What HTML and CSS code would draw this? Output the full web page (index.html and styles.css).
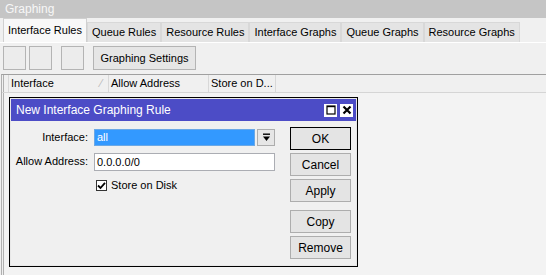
FILE: index.html
```html
<!DOCTYPE html>
<html lang="en">
<head>
    <meta charset="UTF-8">
    <title>Graphing</title>
    <link rel="stylesheet" href="styles.css">
</head>
<body>
    <main id="graphing">
        <header class="caption">Graphing</header>
        <nav class="tabs">
            <span class="tab active">Interface Rules</span>
            <span class="tab">Queue Rules</span>
            <span class="tab">Resource Rules</span>
            <span class="tab">Interface Graphs</span>
            <span class="tab">Queue Graphs</span>
            <span class="tab">Resource Graphs</span>
        </nav>
        <section class="page">
            <div class="toolbar">
                <div class="group">
                    <button class="tool" type="button"></button>
                    <button class="tool" type="button"></button>
                </div>
                <div class="group">
                    <button class="tool" type="button"></button>
                </div>
                <button class="tool wide" type="button">Graphing Settings</button>
            </div>
            <div class="grid">
                <div class="grid-head">
                    <span class="col gutter"></span>
                    <span class="col c-iface">Interface<span class="sort">&#8260;</span></span>
                    <span class="col c-addr">Allow Address</span>
                    <span class="col c-disk">Store on D...</span>
                </div>
                <div class="grid-body">
                    <section class="dialog">
                        <div class="dlg-title">
                            <span>New Interface Graphing Rule</span>
                            <div class="dlg-ctrls">
                                <span class="ctrl">
                                    <svg width="12" height="12" viewBox="0 0 12 12"><rect x="2" y="2" width="8" height="8" fill="none" stroke="#000" stroke-width="1.2"/><line x1="2" y1="2.6" x2="10" y2="2.6" stroke="#000" stroke-width="1.2"/></svg>
                                </span>
                                <span class="ctrl">
                                    <svg width="12" height="12" viewBox="0 0 12 12"><path d="M2.5 2.5 L9.5 9.5 M9.5 2.5 L2.5 9.5" stroke="#000" stroke-width="2.2"/></svg>
                                </span>
                            </div>
                        </div>
                        <div class="dlg-body">
                            <div class="form">
                                <label class="lbl">Interface:</label>
                                <div class="combo">
                                    <span class="combo-val">all</span>
                                    <span class="drop">
                                        <svg width="9" height="9" viewBox="0 0 9 9"><rect x="1" y="0.5" width="7" height="1.4" fill="#000"/><path d="M1 3.5 H8 L4.5 8 Z" fill="#000"/></svg>
                                    </span>
                                </div>
                                <label class="lbl">Allow Address:</label>
                                <div class="field">0.0.0.0/0</div>
                                <span></span>
                                <div class="check-row">
                                    <span class="check">
                                        <svg width="9" height="9" viewBox="0 0 9 9"><path d="M1 4.5 L3.5 7 L8 1.8" fill="none" stroke="#000" stroke-width="1.8"/></svg>
                                    </span>
                                    <span>Store on Disk</span>
                                </div>
                            </div>
                            <div class="actions">
                                <button class="btn default" type="button">OK</button>
                                <button class="btn" type="button">Cancel</button>
                                <button class="btn" type="button">Apply</button>
                                <button class="btn spaced" type="button">Copy</button>
                                <button class="btn" type="button">Remove</button>
                            </div>
                        </div>
                    </section>
                </div>
            </div>
        </section>
    </main>
</body>
</html>
```
FILE: styles.css
```css
body{
    margin: 0;
    padding: 0;
    background-color: #f0f0f0;
    font-family: "Liberation Sans", Arial, sans-serif;
    font-size: 11px;
    color: #000;
}

#graphing{
    width: 546px;
    height: 275px;
    display: flex;
    flex-direction: column;
    overflow: hidden;
}

.caption{
    height: 18px;
    line-height: 18px;
    padding-left: 5px;
    background-color: #c5c5c5;
    color: #f7f7f7;
    font-size: 12px;
}

.tabs{
    height: 24px;
    display: flex;
    align-items: flex-end;
    padding-left: 3px;
    border-bottom: 1px solid #fff;
}

.tab{
    height: 19px;
    line-height: 19px;
    padding: 0 4px;
    background-color: #e4e4e4;
    border: 1px solid #d8d8d8;
    border-bottom: 0px;
    white-space: nowrap;
}

.tab.active{
    height: 23px;
    line-height: 22px;
    background-color: #f8f8f8;
    border-color: #d0d0d0;
}

.page{
    flex: 1;
    display: flex;
    flex-direction: column;
}

.toolbar{
    height: 28px;
    display: flex;
    align-items: flex-start;
    gap: 9px;
    padding: 3px 0 0 3px;
}

.group{
    display: flex;
    gap: 3px;
}

.tool{
    height: 24px;
    width: 23px;
    margin: 0;
    padding: 0;
    background-color: #ececec;
    border: 1px solid #b4b4b4;
    font-family: "Liberation Sans", Arial, sans-serif;
    font-size: 11px;
}

.tool.wide{
    width: 103px;
    background-color: #e6e6e6;
}

.grid{
    flex: 1;
    display: flex;
    flex-direction: column;
    border-top: 1px solid #a0a0a0;
    margin-left: 1px;
    border-left: 1px solid #b0b0b0;
}

.grid-head{
    height: 17px;
    display: flex;
    border-bottom: 1px solid #d5d5d5;
}

.col{
    height: 17px;
    line-height: 17px;
    padding-left: 2px;
    border-right: 1px solid #d8d8d8;
    white-space: nowrap;
    overflow: hidden;
    box-sizing: border-box;
}

.gutter{
    width: 6px;
    padding: 0;
    border-left: 1px solid #b0b0b0;
    margin-left: 1px;
}

.c-iface{
    width: 100px;
    display: flex;
    justify-content: space-between;
}

.sort{
    color: #b8b8b8;
    padding-right: 6px;
}

.c-addr{
    width: 100px;
}

.c-disk{
    width: 67px;
}

.grid-body{
    flex: 1;
    margin-left: 1px;
    border-left: 1px solid #b0b0b0;
    padding: 4px 0 0 5px;
    background-color: #f3f3f3;
}

.dialog{
    width: 349px;
    height: 170px;
    border: 1px solid #000;
    padding: 1px;
    box-sizing: border-box;
    background-color: #f0f0f0;
    box-shadow: inset 0 0 0 1px #e8e8e8;
    display: flex;
    flex-direction: column;
}

.dlg-title{
    height: 22px;
    display: flex;
    justify-content: space-between;
    align-items: center;
    padding: 0 3px 0 5px;
    background-color: #4c4cc6;
    color: #fff;
    font-size: 12px;
}

.dlg-ctrls{
    display: flex;
    gap: 3px;
}

.ctrl{
    width: 13px;
    height: 13px;
    display: flex;
    justify-content: center;
    align-items: center;
    background-color: #fff;
}

.dlg-body{
    flex: 1;
    display: flex;
    justify-content: space-between;
    padding: 0 5px 0 0;
}

.form{
    display: grid;
    grid-template-columns: 77px 181px;
    grid-template-rows: 17px 18px 13px;
    column-gap: 6px;
    row-gap: 7px;
    align-content: start;
    padding-top: 8px;
}

.lbl{
    text-align: right;
    line-height: 17px;
    white-space: nowrap;
}

.combo{
    display: flex;
    gap: 2px;
}

.combo-val{
    flex: 1;
    background-color: #3399ff;
    border: 1px solid #6aa8e6;
    color: #fff;
    padding-left: 2px;
    line-height: 15px;
}

.drop{
    width: 16px;
    display: flex;
    justify-content: center;
    align-items: center;
    background-color: #e6e6e6;
    border: 1px solid #adadad;
}

.field{
    background-color: #fff;
    border: 1px solid #abadb3;
    padding-left: 2px;
    line-height: 16px;
}

.check-row{
    display: flex;
    align-items: center;
    gap: 4px;
    margin-top: 1px;
    padding-left: 2px;
}

.check{
    width: 9px;
    height: 9px;
    display: flex;
    justify-content: center;
    align-items: center;
    border: 1px solid #333;
    background-color: #fff;
}

.actions{
    display: flex;
    flex-direction: column;
    gap: 3px;
    padding-top: 6px;
}

.btn{
    width: 61px;
    height: 23px;
    margin: 0;
    padding: 0;
    background-color: #e4e4e4;
    border: 1px solid #adadad;
    font-family: "Liberation Sans", Arial, sans-serif;
    font-size: 12px;
    color: #000;
}

.btn.default{
    border-color: #000;
}

.btn.spaced{
    margin-top: 5px;
}
```
